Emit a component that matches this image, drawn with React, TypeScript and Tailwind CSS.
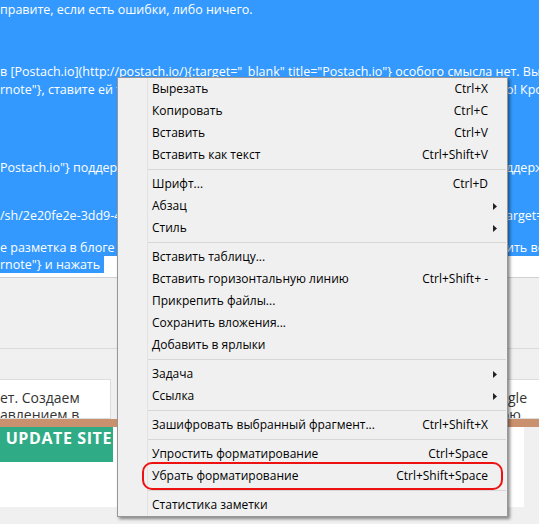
import React from "react";

type Item = { t: string; k?: string; sub?: boolean; mark?: boolean } | "sep";

const items: Item[] = [
  { t: "Вырезать", k: "Ctrl+X" },
  { t: "Копировать", k: "Ctrl+C" },
  { t: "Вставить", k: "Ctrl+V" },
  { t: "Вставить как текст", k: "Ctrl+Shift+V" },
  "sep",
  { t: "Шрифт...", k: "Ctrl+D" },
  { t: "Абзац", sub: true },
  { t: "Стиль", sub: true },
  "sep",
  { t: "Вставить таблицу..." },
  { t: "Вставить горизонтальную линию", k: "Ctrl+Shift+ -" },
  { t: "Прикрепить файлы..." },
  { t: "Сохранить вложения..." },
  { t: "Добавить в ярлыки" },
  "sep",
  { t: "Задача", sub: true },
  { t: "Ссылка", sub: true },
  "sep",
  { t: "Зашифровать выбранный фрагмент...", k: "Ctrl+Shift+X" },
  "sep",
  { t: "Упростить форматирование", k: "Ctrl+Space" },
  { t: "Убрать форматирование", k: "Ctrl+Shift+Space", mark: true },
  "sep",
  { t: "Статистика заметки" },
];

function Arrow() {
  return (
    <svg width="4" height="7" viewBox="0 0 4 7" className="-mr-[9px]">
      <polygon points="0,0 4,3.5 0,7" fill="#222" />
    </svg>
  );
}

function ContextMenu() {
  return (
    <div className="absolute left-[117px] top-[77px] w-[391px] border border-[#979797] bg-[#f0f0f0] shadow-[2px_2px_3px_rgba(0,0,0,0.45)] flex font-['Open_Sans',sans-serif] text-[12px] text-black">
      <div className="w-[30px] border-r border-[#e2e2e2] shrink-0" />
      <div className="flex-1 flex flex-col">
        {items.map((it, i) =>
          it === "sep" ? (
            <div key={i} className="h-[7px] flex items-center mr-[1px]">
              <div className="h-px w-full bg-[#d7d7d7]" />
            </div>
          ) : (
            <div
              key={i}
              className="relative h-[22px] flex items-center justify-between pl-[4px] pr-[19px]"
            >
              <span>{it.t}</span>
              {it.k ? <span>{it.k}</span> : it.sub ? <Arrow /> : null}
              {it.mark ? (
                <div className="absolute left-[-6px] right-[4px] top-[-3px] bottom-[-3px] border-2 border-[#ee1111] rounded-[10px]" />
              ) : null}
            </div>
          )
        )}
      </div>
    </div>
  );
}

function SplitLine({ left, right, className = "" }: { left: React.ReactNode; right: string; className?: string }) {
  return (
    <div className={"flex " + className}>
      <div className="w-[506px] shrink-0 overflow-hidden">{left}</div>
      <div>{right}</div>
    </div>
  );
}

export default function App() {
  return (
    <div className="relative w-[539px] h-[524px] overflow-hidden bg-[#f0f0f0] font-['Open_Sans',sans-serif]">
      {/* selected editor text */}
      <div className="bg-white">
        <div className="bg-[#3399ff] text-white text-[12.5px] leading-[18px] whitespace-nowrap overflow-hidden h-[256px] pt-[1px]">
          <div>правите, если есть ошибки, либо ничего.</div>
          <div className="mt-[44px]">
            в [Postach.io](http://postach.io/){"{"}:target="_blank" title="Postach.io"{"}"} особого смысла нет. Вы
          </div>
          <SplitLine
            left={<>rnote"{"}"}, ставите ей тег, и она сразу окажется в блоге. Просто! Кроме того</>}
            right="о! Кро"
          />
          <SplitLine
            className="mt-[60px]"
            left={<>Postach.io"{"}"} поддерживает Markdown, а значит, всё, что Evernote поддерживает</>}
            right="ддерж"
          />
          <SplitLine
            className="mt-[30px]"
            left={<>/sh/2e20fe2e-3dd9-4c1a-9f5e-8d1b2a7c3e4f/1a2b3c4d5e6f){"{"}:target="_blank"</>}
            right="arget="
          />
          <SplitLine
            className="mt-[14px]"
            left={
              <>
                е разметка в{" "}
                <span className="underline decoration-wavy decoration-[#e02020] decoration-1 underline-offset-[3px]">
                  блоге
                </span>{" "}
                поменялась, достаточно в заметке обновить всё
              </>
            }
            right="ить вс"
          />
        </div>
        <div className="h-[17px] flex text-[12.5px] leading-[17px] whitespace-nowrap">
          <span className="bg-[#3399ff] text-white pr-[4px]">rnote"{"}"} и нажать</span>
        </div>
        <div className="h-[4px]" />
      </div>

      {/* page area */}
      <div className="border-t border-[#d0d0d0] h-[71px]" />
      <div className="border-t border-[#dadada] pt-[30px]">
        <div className="flex h-[40px] text-[14px] leading-[17px] text-[#333] whitespace-nowrap">
          <div className="w-[111px] bg-white border-r border-y border-[#dddddd] overflow-hidden pt-[9px]">
            <div>ет. Создаем</div>
            <div>авлением в</div>
          </div>
          <div className="ml-[359px] flex-1 bg-white border-l border-y border-[#dddddd] overflow-hidden pt-[9px] pl-[10px]">
            <div>Google</div>
            <div className="ml-[5px]">свою</div>
          </div>
        </div>
      </div>
      <div className="h-[8px] bg-[#c9916e]" />
      <div className="w-[524px] h-[80px] bg-white">
        <div className="w-[113px] h-[35px] bg-[#2fab86] flex justify-end items-start">
          <span className="text-white font-bold text-[16px] leading-[22px] tracking-[0.6px] pr-[1px] whitespace-nowrap">
            UPDATE SITE
          </span>
        </div>
      </div>

      <ContextMenu />
    </div>
  );
}
